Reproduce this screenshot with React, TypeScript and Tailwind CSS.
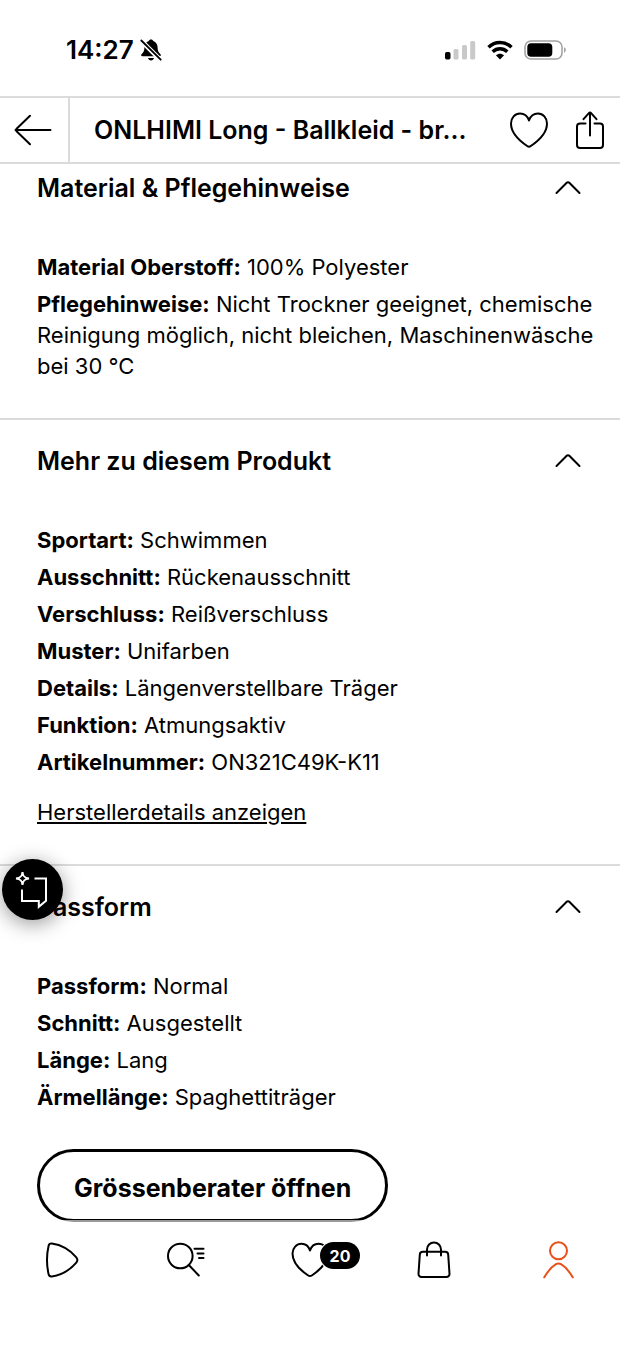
import { useState, type ReactNode } from 'react'

type Detail = { label: string; value: string }

const material: Detail[] = [
  { label: 'Material Oberstoff', value: '100% Polyester' },
  {
    label: 'Pflegehinweise',
    value:
      'Nicht Trockner geeignet, chemische Reinigung möglich, nicht bleichen, Maschinenwäsche bei 30 °C',
  },
]

const product: Detail[] = [
  { label: 'Sportart', value: 'Schwimmen' },
  { label: 'Ausschnitt', value: 'Rückenausschnitt' },
  { label: 'Verschluss', value: 'Reißverschluss' },
  { label: 'Muster', value: 'Unifarben' },
  { label: 'Details', value: 'Längenverstellbare Träger' },
  { label: 'Funktion', value: 'Atmungsaktiv' },
  { label: 'Artikelnummer', value: 'ON321C49K-K11' },
]

const fit: Detail[] = [
  { label: 'Passform', value: 'Normal' },
  { label: 'Schnitt', value: 'Ausgestellt' },
  { label: 'Länge', value: 'Lang' },
  { label: 'Ärmellänge', value: 'Spaghettiträger' },
]

function StatusBar() {
  return (
    <div className="flex h-24 shrink-0 items-center justify-between pt-1 pr-[53px] pl-[66px]">
      <div className="flex items-center gap-1.5">
        <span className="text-[26px] leading-8 font-semibold">14:27</span>
        <svg width="22" height="22" viewBox="0 0 22 22" aria-label="Stumm">
          <path
            d="M11 .5c-1.200 0-2 .6-2.300 1.500C6 3 4.400 5.500 4.400 8.500c0 3.500-1 5-2.600 6.500-1.200 1-.8 2.300.8 2.300h16.800c1.600 0 2-1.300.8-2.300-1.600-1.500-2.600-3-2.600-6.500 0-3-1.600-5.500-4.300-6.500C13 1.100 12.200.5 11 .5Z"
            fill="#000"
          />
          <path d="M8 19h6c-.4 1.500-1.500 2.500-3 2.500S8.400 20.500 8 19Z" fill="#000" />
          <path d="M.5 1 20.500 21" stroke="#fff" strokeWidth="4.600" />
          <path d="M1.300 1.500 20.700 20.700" stroke="#000" strokeWidth="1.800" strokeLinecap="round" />
        </svg>
      </div>
      <div className="flex items-center gap-[11px]">
        <svg width="31" height="20" viewBox="0 0 31 20" aria-label="Mobilfunk">
          <rect x="0" y="12" width="5.500" height="7.500" rx="1.700" fill="#000" />
          <rect x="8.500" y="9" width="5" height="10.500" rx="1.500" fill="#c9c9c9" />
          <rect x="17" y="5" width="5" height="14.500" rx="1.500" fill="#c9c9c9" />
          <rect x="25.200" y="1" width="5" height="18.500" rx="1.500" fill="#c9c9c9" />
        </svg>
        <svg width="26" height="20" viewBox="0 0 26 20" fill="none" aria-label="WLAN">
          <path d="M1.500 7.300C8 .8 18 .8 24.500 7.300" stroke="#000" strokeWidth="3.400" />
          <path d="M5.700 11.700c4.200-4 10.400-4 14.600 0" stroke="#000" strokeWidth="3.400" />
          <path d="M8.900 15.300c2.400-2.100 5.800-2.100 8.200 0L13 19.600Z" fill="#000" />
        </svg>
        <svg width="43" height="20" viewBox="0 0 43 20" fill="none" aria-label="Akku">
          <rect x="1" y="1" width="37" height="18" rx="6" stroke="#a3a3a3" strokeWidth="1.600" />
          <rect x="3.300" y="3.300" width="25" height="13.400" rx="3.800" fill="#000" />
          <path d="M40 7.300c2.400.9 2.400 4.500 0 5.400Z" fill="#a3a3a3" />
        </svg>
      </div>
    </div>
  )
}

function Header() {
  return (
    <header className="flex h-[68px] shrink-0 border-y-2 border-[#d9dbdd]">
      <button
        className="flex w-[70px] shrink-0 items-center justify-center border-r-2 border-[#d9dbdd] pr-0.5"
        aria-label="Zurück"
      >
        <svg width="38" height="32" viewBox="0 0 38 32" fill="none">
          <path
            d="M36.500 16H1.500M16 1.800 2.600 14.700a1.800 1.800 0 0 0 0 2.600L16 30.200"
            stroke="#000"
            strokeWidth="2"
            strokeLinecap="round"
          />
        </svg>
      </button>
      <h1 className="min-w-0 flex-1 self-center truncate pl-6 text-[25px] leading-8 font-semibold">
        ONLHIMI Long - Ballkleid - br...
      </h1>
      <div className="flex shrink-0 items-center gap-7 pr-4 pl-6">
        <button aria-label="Merken">
          <svg width="38" height="36" viewBox="0 0 38 36" fill="none">
            <path
              d="M19 8.500C17.500 4 14 1.500 10 1.500 5 1.500 1 5.800 1 11.500 1 20 9 28.500 17.200 34c1.200.9 2.400.9 3.600 0C29 28.500 37 20 37 11.500c0-5.700-4-10-9-10-4 0-7.500 2.500-9 7Z"
              stroke="#000"
              strokeWidth="2"
              strokeLinejoin="round"
            />
          </svg>
        </button>
        <button aria-label="Teilen">
          <svg width="28" height="38" viewBox="0 0 28 38" fill="none">
            <path
              d="M9.500 12.500H4a3 3 0 0 0-3 3V34a3 3 0 0 0 3 3h20a3 3 0 0 0 3-3V15.500a3 3 0 0 0-3-3h-5.500M14 24.500V1.500M7.500 8.200l5.400-6.100a1.500 1.500 0 0 1 2.200 0l5.400 6.100"
              stroke="#000"
              strokeWidth="2"
              strokeLinecap="round"
            />
          </svg>
        </button>
      </div>
    </header>
  )
}

function DetailList({ items }: { items: Detail[] }) {
  return (
    <ul className="-mr-4 flex flex-col gap-1.5 text-[22px] leading-[31px]">
      {items.map((item) => (
        <li key={item.label}>
          <strong className="font-bold">{item.label}:</strong> {item.value}
        </li>
      ))}
    </ul>
  )
}

function Section({ title, children }: { title: string; children: ReactNode }) {
  const [open, setOpen] = useState(true)

  return (
    <section className="border-t-2 border-[#d9dbdd] px-[37px] pt-[25px] pb-9 first:border-t-0 first:pt-2">
      <h2 className="text-[25px] leading-8 font-semibold">
        <button
          className="flex w-full items-center justify-between text-left"
          onClick={() => setOpen(!open)}
          aria-expanded={open}
        >
          {title}
          <svg
            className={open ? 'mr-0.5' : 'mr-0.5 rotate-180'}
            width="26"
            height="14"
            viewBox="0 0 26 14"
            fill="none"
            aria-hidden="true"
          >
            <path
              d="M1.500 12 11.700 1.800a1.800 1.800 0 0 1 2.600 0L24.500 12"
              stroke="#000"
              strokeWidth="2"
              strokeLinecap="round"
            />
          </svg>
        </button>
      </h2>
      {open && <div className="pt-12">{children}</div>}
    </section>
  )
}

function BottomNav() {
  return (
    <nav
      className="relative grid h-32 shrink-0 grid-cols-5 items-start justify-items-center bg-white pt-[18px] shadow-[0_-2px_0_rgba(255,255,255,0.6)]"
      aria-label="Hauptmenü"
    >
      <a href="#start" aria-label="Start">
        <svg width="40" height="40" viewBox="0 0 40 40" fill="none">
          <path
            d="M9.800 3.600C18 4.700 27.500 9.500 34.300 17.400c1.400 1.700 1.400 3.500 0 5.200C27.500 30.500 18 35.300 9.800 36.400c-1.800.2-2.800-.5-3.200-2.200-2-8.800-2-19.600 0-28.400.4-1.700 1.400-2.400 3.200-2.200Z"
            stroke="#000"
            strokeWidth="2"
          />
        </svg>
      </a>
      <a href="#suche" aria-label="Suche">
        <svg width="40" height="40" viewBox="0 0 40 40" fill="none" stroke="#000" strokeLinecap="round">
          <circle cx="14.300" cy="16" r="12.300" strokeWidth="2" />
          <path d="m22.800 25 10 10.500" strokeWidth="2" />
          <path d="M28.500 8.700h9M31.500 13.400h6M33 18h4.500" strokeWidth="2" />
        </svg>
      </a>
      <a href="#wunschliste" className="relative" aria-label="Wunschliste, 20 Artikel">
        <svg width="40" height="40" viewBox="0 0 40 40" fill="none">
          <path
            d="M20 10.500C18.500 6 15.500 3.800 11.500 3.800 6.500 3.800 2.500 8 2.500 13.500c0 8 7 16.200 15.700 22 1.200.8 2.400.8 3.600 0C30.500 29.700 37.500 21.500 37.500 13.500c0-5.500-4-9.700-9-9.700-4 0-7 2.200-8.500 6.700Z"
            stroke="#000"
            strokeWidth="2"
            strokeLinejoin="round"
          />
        </svg>
        <span className="absolute top-0.5 left-[30px] flex h-[27px] w-10 items-center justify-center rounded-full bg-black text-base font-bold text-white ring-1 ring-white">
          20
        </span>
      </a>
      <a href="#warenkorb" aria-label="Warenkorb">
        <svg width="40" height="40" viewBox="0 0 40 40" fill="none" stroke="#000" strokeWidth="2" strokeLinecap="round">
          <path d="M8.800 11.800h22.400a3 3 0 0 1 3 2.800l1.300 19.200a3 3 0 0 1-3 3.200h-25a3 3 0 0 1-3-3.200l1.300-19.200a3 3 0 0 1 3-2.800Z" />
          <path d="M13 15.500V9.500a7 7 0 0 1 14 0v6" />
        </svg>
      </a>
      <a href="#profil" aria-label="Profil" aria-current="page">
        <svg width="40" height="40" viewBox="0 0 40 40" fill="none" stroke="#e8501a" strokeWidth="2" strokeLinecap="round">
          <circle cx="20.500" cy="10.700" r="8.500" />
          <path d="M6.300 37.300C10 31 14 26.500 18 24.200q2.500-1.400 5 0C27 26.500 31 31 34.700 37.300" />
        </svg>
      </a>
    </nav>
  )
}

export default function App() {
  return (
    <div className="flex h-screen flex-col bg-white font-[Inter,'Liberation_Sans',sans-serif] text-black">
      <StatusBar />
      <Header />
      <main className="min-h-0 flex-1 overflow-y-auto [scrollbar-width:none]">
        <Section title="Material & Pflegehinweise">
          <DetailList items={material} />
        </Section>
        <Section title="Mehr zu diesem Produkt">
          <DetailList items={product} />
          <a
            href="#hersteller"
            className="mt-[19px] block text-[22px] leading-[31px] underline decoration-2 underline-offset-2"
          >
            Herstellerdetails anzeigen
          </a>
        </Section>
        <Section title="Passform">
          <DetailList items={fit} />
          <button className="mt-9 h-[73px] rounded-full border-3 border-black px-[34px] pt-1 text-[25px] leading-8 font-bold">
            Grössenberater öffnen
          </button>
        </Section>
      </main>
      <BottomNav />
      <button
        className="fixed bottom-[430px] left-0.5 flex size-[61px] items-center justify-center rounded-full bg-black shadow-[0_4px_20px_rgba(0,0,0,0.4)]"
        aria-label="Assistent"
      >
        <svg width="41" height="41" viewBox="0 0 41 41" fill="none" stroke="#fff" strokeWidth="2">
          <path d="M22.500 9.500H34v22.300l-7.200 6V32H10V20.500" />
          <path d="M10.500 3c.4 4.500 2 6.100 6.500 6.500-4.500.4-6.100 2-6.500 6.500-.4-4.500-2-6.100-6.500-6.500 4.500-.4 6.100-2 6.500-6.500Z" />
        </svg>
      </button>
    </div>
  )
}
